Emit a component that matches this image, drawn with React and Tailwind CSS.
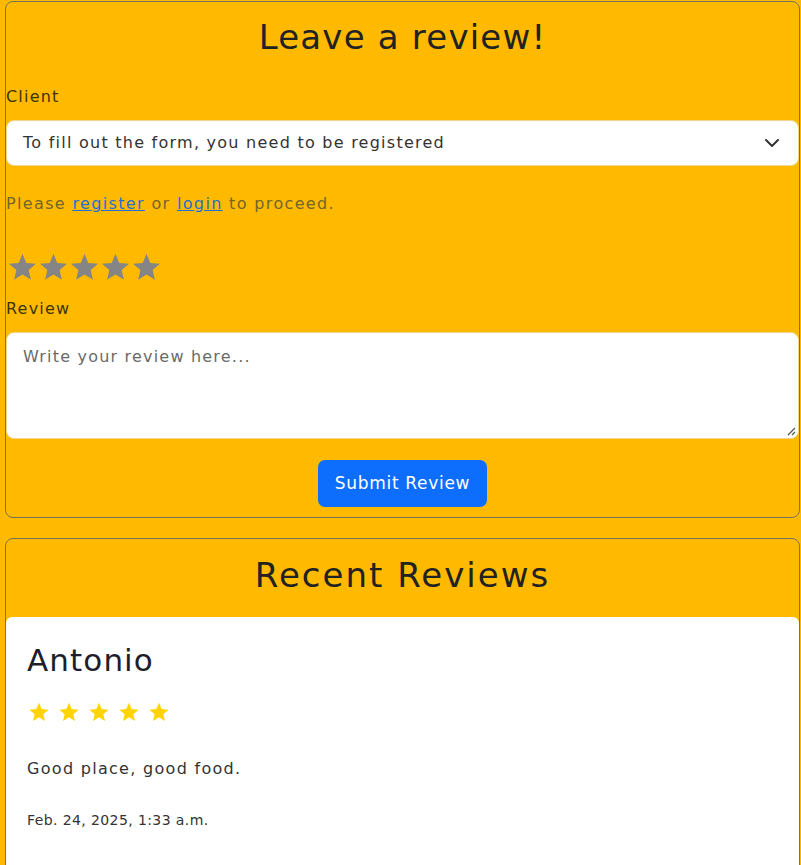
import React from "react";

function Star({ size, color, w }) {
  return (
    <svg width={w || size} height={size} viewBox="0 0 24 24" className="block">
      <path
        d="M12 1.8l2.95 7.02 7.55.6-5.75 4.95 1.77 7.43L12 17.8l-6.52 4 1.77-7.43L1.5 9.42l7.55-.6z"
        fill={color}
      />
    </svg>
  );
}

export default function App() {
  const font = { fontFamily: '"DejaVu Sans", sans-serif' };
  return (
    <div className="min-h-[865px] bg-[#ffba00] pl-[5px] pr-[1px] pt-px overflow-hidden" style={font}>
      {/* Leave a review card */}
      <div className="border border-[#737458] rounded-[8px] bg-[#ffba00] pt-[15px] pb-[10px]">
        <h1 className="text-center text-[34px] leading-[41px] text-[#222] tracking-[1.2px]">Leave a review!</h1>
        <div className="mt-[27px] text-[16px] leading-[24px] text-[#3f3300] tracking-[1.2px]">Client</div>
        <div className="mt-[11px] h-[46px] bg-white rounded-[8px] flex items-center justify-between pl-[16px] pr-[18px] border border-[#f2d48a]">
          <span className="text-[16px] text-[#333] tracking-[1.25px]">To fill out the form, you need to be registered</span>
          <svg width="16" height="16" viewBox="0 0 16 16" fill="none" stroke="#333" strokeWidth="2" strokeLinecap="round" strokeLinejoin="round">
            <path d="M2 5l6 6 6-6" />
          </svg>
        </div>
        <p className="mt-[26px] text-[16px] leading-[24px] text-[#74652d] tracking-[1.35px]">
          Please <a href="#" className="text-[#1f6fd6] underline">register</a> or{" "}
          <a href="#" className="text-[#1f6fd6] underline">login</a> to proceed.
        </p>
        <div className="mt-[35px] flex pl-px">
          {[0, 1, 2, 3, 4].map((i) => (
            <Star key={i} size={32} w={31} color="#858585" />
          ))}
        </div>
        <div className="mt-[14px] text-[16px] leading-[24px] text-[#3f3300] tracking-[1.2px]">Review</div>
        <div className="mt-[11px] h-[107px] bg-white rounded-[8px] border border-[#f2d48a] relative px-[16px] pt-[12px]">
          <span className="text-[16px] text-[#6a6a6a] tracking-[1.2px]">Write your review here...</span>
          <svg className="absolute right-[2px] bottom-[2px]" width="10" height="10" viewBox="0 0 10 10" stroke="#555" strokeWidth="1.2">
            <path d="M9 2L2 9M9 6L6 9" />
          </svg>
        </div>
        <div className="mt-[21px] flex justify-center">
          <button className="h-[47px] px-[17px] bg-[#0d6efd] rounded-[7px] text-white text-[17px] tracking-[0.7px]">Submit Review</button>
        </div>
      </div>

      {/* Recent reviews */}
      <div className="mt-[20px] border border-[#737458] rounded-t-[8px] bg-[#ffba00] pt-[16px]">
        <h2 className="text-center text-[34px] leading-[41px] text-[#222] tracking-[2px]">Recent Reviews</h2>
        <div className="mt-[21px] bg-white rounded-t-[6px] pl-[21px] pt-[24px] h-[260px]">
          <div className="text-[31px] leading-[38px] text-[#1e1e2a] tracking-[1.1px]">Antonio</div>
          <div className="mt-[22px] flex gap-[8px] pl-px">
            {[0, 1, 2, 3, 4].map((i) => (
              <Star key={i} size={22} color="#ffd400" />
            ))}
          </div>
          <p className="mt-[34px] text-[16px] leading-[24px] text-[#333] tracking-[1.3px]">Good place, good food.</p>
          <p className="mt-[30px] text-[14px] leading-[18px] text-[#333] tracking-[0.4px]">Feb. 24, 2025, 1:33 a.m.</p>
        </div>
      </div>
    </div>
  );
}
